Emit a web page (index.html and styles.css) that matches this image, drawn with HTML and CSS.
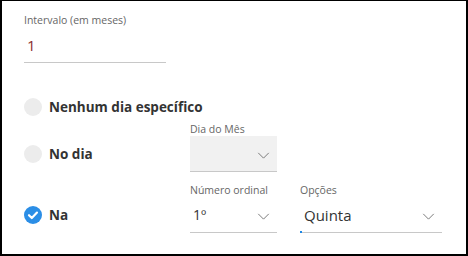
FILE: index.html
```html
<!DOCTYPE html>
<html lang="pt">
<head>
  <meta charset="UTF-8" />
  <title>Recorrência</title>
  <link rel="stylesheet" href="styles.css">
</head>
<body>
  <div class="panel">
    <!-- INTERVALO -->
    <div class="field wide">
      <label class="field-label">Intervalo (em meses)</label>
      <div class="field-input red">1</div>
    </div>

    <!-- OPÇÕES -->
    <div class="option-row first">
      <div class="choice">
        <span class="radio"></span>
        <span class="choice-text">Nenhum dia específico</span>
      </div>
    </div>

    <div class="option-row second">
      <div class="choice">
        <span class="radio"></span>
        <span class="choice-text">No dia</span>
      </div>
      <div class="field narrow">
        <label class="field-label">Dia do Mês</label>
        <div class="field-input select filled">
          <span></span>
          <svg class="chevron" viewBox="0 0 14 8"><path d="M1 1l6 6 6-6" /></svg>
        </div>
      </div>
    </div>

    <div class="option-row last">
      <div class="choice">
        <span class="radio checked">
          <svg viewBox="0 0 18 18"><path d="M5 9.2l2.8 2.8L13 6.6" /></svg>
        </span>
        <span class="choice-text">Na</span>
      </div>
      <div class="field narrow">
        <label class="field-label">Número ordinal</label>
        <div class="field-input select">
          <span>1º</span>
          <svg class="chevron" viewBox="0 0 14 8"><path d="M1 1l6 6 6-6" /></svg>
        </div>
      </div>
      <div class="field wide options">
        <label class="field-label">Opções</label>
        <div class="field-input select big focused">
          <span>Quinta</span>
          <svg class="chevron" viewBox="0 0 14 8"><path d="M1 1l6 6 6-6" /></svg>
        </div>
      </div>
    </div>
  </div>
</body>
</html>
```

FILE: styles.css
```css
* { margin: 0; padding: 0; box-sizing: border-box; }

body {
  font-family: 'Open Sans', sans-serif;
  background: #fff;
  color: #333;
}

.panel {
  width: 468px;
  height: 256px;
  border: 2px solid #000;
  border-top-width: 1px;
  padding: 12px 22px 0;
  background: #fff;
}

.field {
  display: flex;
  flex-direction: column;
}

.field.wide { width: 142px; }
.field.narrow { width: 87px; }
.field.options { margin-left: 23px; }

.field-label {
  font-size: 10.5px;
  line-height: 14px;
  color: #666;
  white-space: nowrap;
}

.field-input {
  position: relative;
  height: 36px;
  display: flex;
  align-items: center;
  justify-content: space-between;
  padding: 0 7px 0 3px;
  border-bottom: 1px solid #c8c8c8;
  font-size: 14px;
  color: #333;
}

.field-input.red {
  color: #8b2f2f;
  font-size: 15px;
}

.field-input.filled { background: #f1f1f1; }

.field-input.big { font-size: 15px; padding-left: 4px; }

/* ripple da linha de foco */
.field-input.focused::after {
  content: "";
  position: absolute;
  left: 0;
  bottom: -1px;
  width: 2px;
  height: 2px;
  background: #1e88e5;
}

.chevron {
  width: 13px;
  height: 7px;
  margin-top: 4px;
  fill: none;
  stroke: #777;
  stroke-width: 1.1;
}

.option-row {
  display: flex;
  align-items: flex-end;
}

.option-row.first { margin-top: 30px; }
.option-row.first .choice { height: 28px; }
.option-row.second { margin-top: 1px; }
.option-row.last { margin-top: 11px; }

.choice {
  width: 166px;
  height: 36px;
  display: flex;
  align-items: center;
  gap: 7px;
  white-space: nowrap;
}

.radio {
  flex: none;
  width: 18px;
  height: 18px;
  border-radius: 50%;
  background: #ececec;
  display: flex;
  align-items: center;
  justify-content: center;
}

.radio.checked { background: #2b8ee6; }

.radio svg {
  width: 18px;
  height: 18px;
  fill: none;
  stroke: #fff;
  stroke-width: 2.2;
  stroke-linecap: round;
  stroke-linejoin: round;
}

.choice-text {
  font-size: 13.5px;
  font-weight: 700;
  color: #333;
}
```
